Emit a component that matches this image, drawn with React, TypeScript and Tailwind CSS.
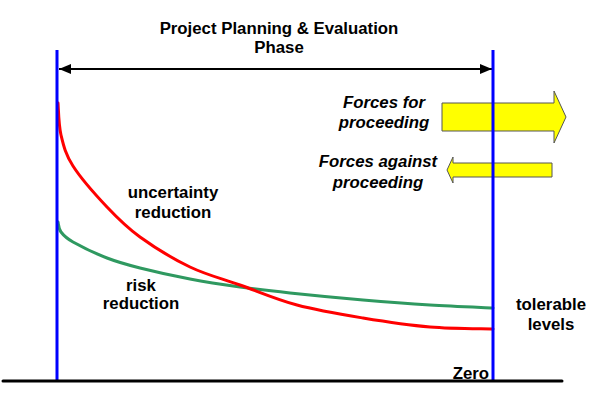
import React from "react";

type Pt = [number, number];

// smooth path through points (catmull-rom -> cubic bezier)
const smooth = (pts: Pt[]) => {
  let d = `M${pts[0][0]},${pts[0][1]}`;
  for (let i = 0; i < pts.length - 1; i++) {
    const p0 = pts[i - 1] || pts[i];
    const p1 = pts[i];
    const p2 = pts[i + 1];
    const p3 = pts[i + 2] || p2;
    const c1x = p1[0] + (p2[0] - p0[0]) / 6;
    const c1y = p1[1] + (p2[1] - p0[1]) / 6;
    const c2x = p2[0] - (p3[0] - p1[0]) / 6;
    const c2y = p2[1] - (p3[1] - p1[1]) / 6;
    d += ` C${c1x},${c1y} ${c2x},${c2y} ${p2[0]},${p2[1]}`;
  }
  return d;
};

const redCurve: Pt[] = [
  [58, 103], [61, 135], [73, 166], [107, 207], [140, 237], [190, 267],
  [240, 285], [297, 305], [363, 318], [430, 327], [493, 329],
];

const greenCurve: Pt[] = [
  [58, 222], [61, 232], [73, 242], [107, 258], [140, 268], [190, 279],
  [240, 287], [290, 293], [363, 300], [430, 305], [493, 308],
];

const Label = ({ x, y, lines, italic = false, anchor = "middle", gap = 20 }: {
  x: number; y: number; lines: string[]; italic?: boolean; anchor?: "middle" | "end" | "start"; gap?: number;
}) => (
  <text
    x={x}
    y={y}
    textAnchor={anchor}
    fontFamily="'Liberation Sans', Arial, sans-serif"
    fontWeight="bold"
    fontStyle={italic ? "italic" : "normal"}
    fontSize="16.8"
    fill="#000"
  >
    {lines.map((l, i) => (
      <tspan key={i} x={x} dy={i === 0 ? 0 : gap}>{l}</tspan>
    ))}
  </text>
);

export default function App() {
  return (
    <div className="w-[602px] h-[404px] bg-white overflow-hidden">
      <svg width="602" height="404" viewBox="0 0 602 404" className="block">
        <defs>
          <marker id="head" viewBox="0 0 12 10" refX="12" refY="5" markerWidth="12" markerHeight="10" markerUnits="userSpaceOnUse" orient="auto-start-reverse">
            <path d="M0,0 L12,5 L0,10 Z" fill="#000" />
          </marker>
        </defs>

        {/* phase span arrow */}
        <line x1="59" y1="69" x2="492" y2="69" stroke="#000" strokeWidth="2" markerStart="url(#head)" markerEnd="url(#head)" />

        {/* yellow force arrows */}
        <polygon points="442,103 554,103 554,91 566,117 554,143 554,131 442,131" fill="#ffff00" stroke="#555" strokeWidth="1" />
        <polygon points="552,163 453,163 453,157 447,170 453,183 453,177 552,177" fill="#ffff00" stroke="#555" strokeWidth="1" />

        {/* curves */}
        <path d={smooth(greenCurve)} fill="none" stroke="#2f9960" strokeWidth="3" strokeLinecap="round" />
        <path d={smooth(redCurve)} fill="none" stroke="#ff0000" strokeWidth="3" strokeLinecap="round" />

        {/* verticals and baseline */}
        <line x1="57" y1="50" x2="57" y2="381" stroke="#0000ff" strokeWidth="3" />
        <line x1="493" y1="50" x2="493" y2="381" stroke="#0000ff" strokeWidth="3" />
        <line x1="3" y1="381" x2="562" y2="381" stroke="#000" strokeWidth="3" strokeLinecap="round" />

        <Label x={279} y={34} lines={["Project Planning & Evaluation", "Phase"]} gap={19} />
        <Label x={384} y={108} lines={["Forces for", "proceeding"]} italic />
        <Label x={378} y={167} lines={["Forces against", "proceeding"]} italic gap={21} />
        <Label x={173} y={198} lines={["uncertainty", "reduction"]} />
        <Label x={141} y={291} lines={["risk", "reduction"]} gap={18} />
        <Label x={551} y={310} lines={["tolerable", "levels"]} />
        <Label x={489} y={379} lines={["Zero"]} anchor="end" />
      </svg>
    </div>
  );
}
